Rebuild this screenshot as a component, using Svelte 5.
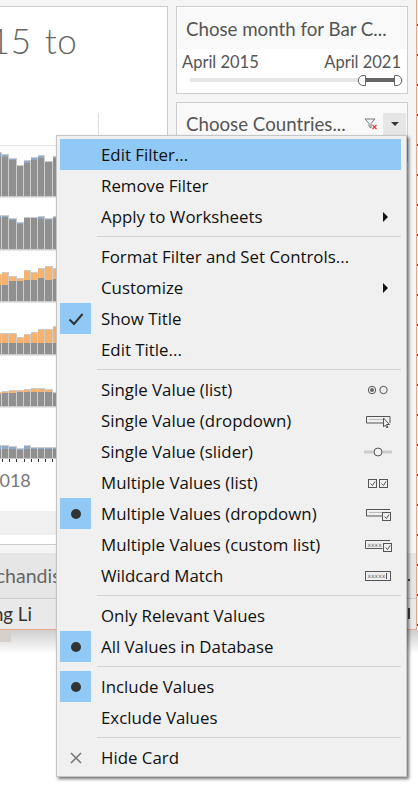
<script>
	// Bars: [grey height, cap height]
	const chartRows = [
		{ cap: 'blue', bars: [[40, 3], [39, 2], [36, 1], [30, 0], [33, 2], [36, 2], [38, 2], [34, 0], [38, 1]] },
		{ cap: 'blue', bars: [[31, 2], [32, 1], [29, 1], [25, 1], [31, 0], [31, 0], [30, 2], [29, 1], [31, 1]] },
		{ cap: 'orange', bars: [[16, 10], [16, 12], [20, 4], [20, 2], [21, 9], [21, 7], [23, 9], [21, 13], [22, 10]] },
		{ cap: 'orange', bars: [[11, 9], [11, 9], [11, 9], [11, 5], [11, 8], [11, 10], [11, 13], [11, 13], [11, 16]] },
		{ cap: 'orange', bars: [[12, 1], [13, 1], [13, 2], [14, 1], [14, 2], [14, 3], [14, 3], [14, 2], [13, 0]] },
		{ cap: 'blue', bars: [[8, 4], [9, 3], [9, 2], [8, 1], [9, 3], [9, 1], [9, 1], [9, 1], [9, 1]] }
	];

	const menuGroups = [
		[
			{ label: 'Edit Filter...', active: true },
			{ label: 'Remove Filter' },
			{ label: 'Apply to Worksheets', sub: true }
		],
		[
			{ label: 'Format Filter and Set Controls...' },
			{ label: 'Customize', sub: true },
			{ label: 'Show Title', mark: 'check' },
			{ label: 'Edit Title...' }
		],
		[
			{ label: 'Single Value (list)', icon: 'radio' },
			{ label: 'Single Value (dropdown)', icon: 'dropdown' },
			{ label: 'Single Value (slider)', icon: 'slider' },
			{ label: 'Multiple Values (list)', icon: 'checks' },
			{ label: 'Multiple Values (dropdown)', icon: 'multi', mark: 'dot' },
			{ label: 'Multiple Values (custom list)', icon: 'custom' },
			{ label: 'Wildcard Match', icon: 'wildcard' }
		],
		[
			{ label: 'Only Relevant Values' },
			{ label: 'All Values in Database', mark: 'dot' }
		],
		[
			{ label: 'Include Values', mark: 'dot' },
			{ label: 'Exclude Values' }
		],
		[{ label: 'Hide Card', mark: 'x' }]
	];
</script>

<div class="page">
	<div class="dash">
		<div class="workspace">
			<section class="view">
				<div class="view-head">
					<h1 class="view-title">2015 to</h1>
					<span class="axis-line"></span>
				</div>
				<div class="chart">
					{#each chartRows as row}
						<div class="chart-row">
							{#each row.bars as bar}
								<div class="bar">
									<div class="bar-cap {row.cap}" style="height: {bar[1]}px"></div>
									<div class="bar-grey" style="height: {bar[0]}px"></div>
								</div>
							{/each}
						</div>
					{/each}
				</div>
				<div class="ticks"></div>
				<div class="year">2018</div>
				<div class="band"></div>
			</section>

			<aside class="cards">
				<div class="card month">
					<div class="card-head">Chose month for Bar C...</div>
					<div class="range-labels"><span>April 2015</span><span>April 2021</span></div>
					<div class="slider">
						<div class="slider-fill"></div>
						<span class="knob left"></span>
						<span class="knob right"></span>
					</div>
				</div>
				<div class="card countries">
					<div class="card-head">
						<span class="card-name">Choose Countries...</span>
						<svg class="clear-filter" viewBox="0 0 14 12" width="14" height="12">
							<path d="M1 1h10L7 5.500V10L5 8.500v-3z" fill="none" stroke="#777" />
							<path d="M8.500 7l4 4M12.500 7l-4 4" stroke="#d33" stroke-width="1.100" />
						</svg>
						<span class="card-drop"></span>
					</div>
				</div>
			</aside>
		</div>
		<div class="tab-strip"><span>Merchandise</span></div>
		<div class="status-strip"><span>Zhang Li</span></div>
		<span class="scroll-nub"></span>
		<span class="scroll-dot"></span>
	</div>
	<div class="below"><div class="grip"></div></div>
	<div class="edge-dots"></div>

	<div class="menu">
		{#each menuGroups as group, i}
			{#if i > 0}<div class="sep"></div>{/if}
			{#each group as item}
				<div class="item" class:active={item.active}>
					<span class="mark" class:on={item.mark === 'check' || item.mark === 'dot'}>
						{#if item.mark === 'check'}
							<svg viewBox="0 0 16 14" width="16" height="14"><path d="M1.500 7.500l4.500 4.500 8.500-10" fill="none" stroke="#333" stroke-width="2" /></svg>
						{:else if item.mark === 'dot'}
							<span class="dot"></span>
						{:else if item.mark === 'x'}
							<svg viewBox="0 0 12 12" width="12" height="12"><path d="M1 1l10 10M11 1L1 11" stroke="#777" stroke-width="1.600" /></svg>
						{/if}
					</span>
					<span class="label">{item.label}</span>
					{#if item.sub}<span class="arrow"></span>{/if}
					{#if item.icon}
						<svg class="kind" viewBox="0 0 30 14" width="30" height="14" fill="none" stroke="#555">
							{#if item.icon === 'radio'}
								<circle cx="10" cy="7" r="3.700" /><circle cx="10" cy="7" r="2" fill="#666" stroke="none" /><circle cx="21.500" cy="7" r="3.700" />
							{:else if item.icon === 'dropdown'}
								<path d="M28 9V2.500H4.500v6.500h17" /><path d="M7 5.500h14" stroke="#bbb" />
								<path d="M21.500 4v9l2-2 1.500 3 1-.5-1.500-3h3z" fill="#f0f0f0" />
							{:else if item.icon === 'slider'}
								<path d="M2 7h28" stroke="#ccc" stroke-width="3" /><circle cx="16" cy="7" r="4" fill="#f0f0f0" />
							{:else if item.icon === 'checks'}
								<rect x="6.500" y="3.500" width="8" height="8" /><rect x="17.500" y="3.500" width="8" height="8" />
								<path d="M8.500 7.500l2 2 2.500-4M19.500 7.500l2 2 2.500-4" />
							{:else if item.icon === 'multi'}
								<path d="M28 2.500H4.500v6.500h16" /><path d="M7 5.500h13" stroke="#bbb" />
								<rect x="20.500" y="5.500" width="8" height="8" /><path d="M22.500 9.500l2 2 2.500-4" />
							{:else if item.icon === 'custom'}
								<path d="M28 2.500H3.500v8h17" /><text x="5.500" y="9" class="xs">xxxx</text>
								<rect x="21.500" y="5.500" width="8" height="8" fill="#f0f0f0" /><path d="M23.500 9.500l2 2 2.500-4" />
							{:else}
								<rect x="3.500" y="2.500" width="25" height="9" /><text x="5.500" y="9" class="xs">xxxxx</text><path d="M24.500 4v6" />
							{/if}
						</svg>
					{/if}
				</div>
			{/each}
		{/each}
	</div>
</div>

<style>
	:global(body) {
		margin: 0;
		background: #fff;
	}

	.page {
		position: relative;
		width: 418px;
		height: 786px;
		overflow: hidden;
		font-family: Lato, sans-serif;
	}

	.dash {
		position: relative;
		display: flex;
		flex-direction: column;
		width: 416px;
		height: 629px;
		background: #f5f5f5;
		border-right: 1px solid #e8a888;
		border-bottom: 1px solid #e8a888;
	}

	.workspace {
		flex: none;
		display: flex;
		gap: 8px;
		height: 547px;
		padding-top: 6px;
	}

	.view {
		flex: none;
		box-sizing: border-box;
		width: 168px;
		height: 539px;
		background: #fff;
		border-top: 1px solid #ccc;
		border-right: 1px solid #ccc;
		border-bottom: 1px solid #ccc;
		overflow: hidden;
	}

	.view-head {
		position: relative;
		height: 138px;
		overflow: hidden;
	}

	.view-title {
		margin: 13px 0 0 -52px;
		font-size: 35px;
		line-height: 40px;
		font-weight: 300;
		letter-spacing: 0.6px;
		word-spacing: 3px;
		color: #666;
		white-space: nowrap;
	}

	.axis-line {
		position: absolute;
		left: 98px;
		top: 106px;
		bottom: 0;
		width: 1px;
		background: #ddd;
	}

	.chart {
		display: flex;
		flex-direction: column;
		width: 110px;
	}

	.chart-row {
		display: flex;
		align-items: flex-end;
		height: 52.400px;
		margin-left: -5px;
		box-sizing: border-box;
		border-top: 1px solid #e6e6e6;
	}

	.bar {
		flex: none;
		display: flex;
		flex-direction: column;
		box-sizing: border-box;
		width: 7.200px;
		border-top: 1px solid #ccc;
		border-right: 1px solid #ccc;
		border-bottom: 1px solid #ccc;
	}

	.bar-cap.blue {
		background: #8fa9c8;
	}

	.bar-cap.orange {
		background: #f6b26f;
	}

	.bar-grey {
		background: #909090;
	}

	.ticks {
		height: 3px;
		width: 56px;
		background: repeating-linear-gradient(90deg, #333 0 1px, transparent 1px 7.200px);
		background-position: 2px 0;
	}

	.year {
		margin: 7px 0 0 -11px;
		font-size: 18px;
		line-height: 22px;
		color: #777;
	}

	.band {
		margin-top: 20px;
		height: 24px;
		background: #f0f0f0;
	}

	.cards {
		display: flex;
		flex-direction: column;
		gap: 8px;
		width: 232px;
	}

	.card {
		box-sizing: border-box;
		background: #fff;
		border: 1px solid #ccc;
		padding: 1px;
	}

	.month {
		height: 88px;
	}

	.countries {
		height: 60px;
		background: #f9f9f9;
	}

	.card-head {
		display: flex;
		align-items: center;
		height: 41px;
		padding-left: 8px;
		background: #f9f9f9;
		font-size: 18.700px;
		color: #555;
		white-space: nowrap;
	}

	.countries .card-head {
		height: 40px;
	}

	.card-name {
		flex: 1;
	}

	.range-labels {
		display: flex;
		justify-content: space-between;
		padding: 3px 5px 0 4px;
		font-size: 16.500px;
		line-height: 20px;
		color: #555;
	}

	.slider {
		position: relative;
		height: 4px;
		margin: 6px 3px 0 12px;
		background: #e6e6e6;
	}

	.slider-fill {
		position: absolute;
		left: 170px;
		right: 6px;
		top: 0;
		height: 4px;
		background: #666;
	}

	.knob {
		position: absolute;
		top: -3px;
		box-sizing: border-box;
		width: 8px;
		height: 11px;
		background: #fff;
		border: 1px solid #666;
	}

	.knob.left {
		left: 168px;
		border-radius: 5px 0 0 5px;
	}

	.knob.right {
		right: 1px;
		border-radius: 0 5px 5px 0;
	}

	.clear-filter {
		flex: none;
	}

	.card-drop {
		position: relative;
		flex: none;
		width: 23px;
		height: 23px;
		margin-left: 5px;
		background: #e6e6e6;
	}

	.card-drop::after {
		content: '';
		position: absolute;
		left: 8px;
		top: 9px;
		border-top: 4px solid #333;
		border-left: 4px solid transparent;
		border-right: 4px solid transparent;
	}

	.tab-strip,
	.status-strip {
		display: flex;
		align-items: center;
		white-space: nowrap;
		overflow: hidden;
	}

	.tab-strip {
		height: 45px;
		background: #e6e6e6;
		border-bottom: 1px solid #ccc;
		font-size: 19.500px;
		color: #666;
		text-indent: -39px;
	}

	.status-strip {
		flex: 1;
		background: #e9e9e9;
		font-size: 18.700px;
		color: #333;
		text-indent: -38px;
	}

	.scroll-nub {
		position: absolute;
		left: 408px;
		top: 608px;
		width: 2px;
		height: 11px;
		background: #444;
	}

	.scroll-dot {
		position: absolute;
		left: 408px;
		top: 579px;
		width: 2px;
		height: 2px;
		background: #444;
	}

	.edge-dots {
		position: absolute;
		right: 0;
		top: 0;
		width: 1px;
		height: 629px;
		background: repeating-linear-gradient(transparent 0 24px, #555 24px 26px, transparent 26px 30px);
	}

	.below {
		height: 24px;
		background: linear-gradient(#cfcfcf, #fff);
	}

	.grip {
		width: 11px;
		height: 12px;
		background: #d6d0cc;
	}

	/* Context menu */
	.menu {
		position: absolute;
		left: 56px;
		top: 135px;
		box-sizing: border-box;
		width: 351px;
		height: 642px;
		padding: 3px 5px 3px 3px;
		background: #f0f0f0;
		border: 1px solid #c6c6c6;
		box-shadow: 2px 2px 3px rgba(0, 0, 0, 0.55);
		font-family: "Open Sans", sans-serif;
		font-size: 16.850px;
		color: #111;
	}

	.item {
		display: flex;
		align-items: center;
		height: 31px;
	}

	.item.active {
		background: #90c8f6;
	}

	.mark {
		flex: none;
		display: flex;
		align-items: center;
		justify-content: center;
		width: 31px;
		height: 31px;
		margin-right: 10px;
	}

	.mark.on {
		background: #90c8f6;
	}

	.dot {
		width: 10px;
		height: 10px;
		border-radius: 50%;
		background: #333;
	}

	.label {
		flex: 1;
		white-space: nowrap;
	}

	.arrow {
		width: 0;
		height: 0;
		margin-right: 13px;
		border-left: 5px solid #111;
		border-top: 5px solid transparent;
		border-bottom: 5px solid transparent;
	}

	.kind {
		flex: none;
		margin-right: 9px;
	}

	.xs {
		font-family: "DejaVu Sans", sans-serif;
		font-size: 6px;
		fill: #666;
		stroke: none;
	}

	.sep {
		height: 1px;
		margin: 4px 0 4px 37px;
		background: #d2d2d2;
	}
</style>
